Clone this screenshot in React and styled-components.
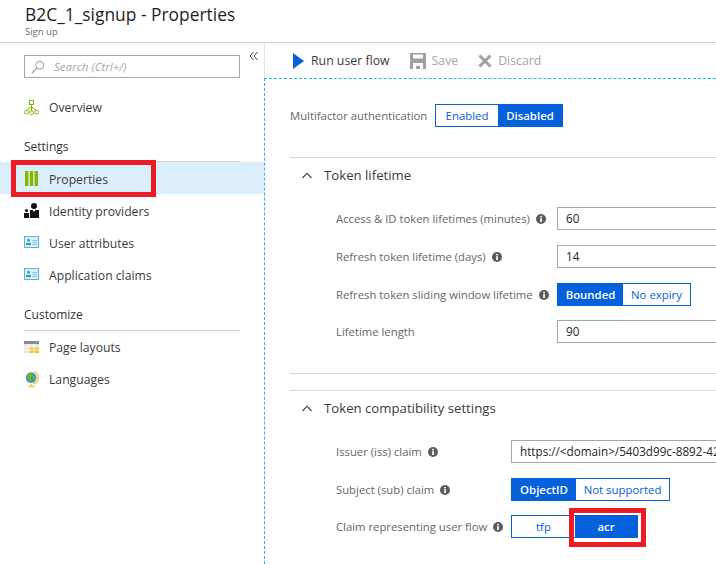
import React from "react";
import styled, { createGlobalStyle } from "styled-components";

const GlobalStyle = createGlobalStyle`
  html, body {
    margin: 0;
    padding: 0;
    background: #fff;
    overflow: hidden;
  }
  body {
    font-family: "Open Sans", "Noto Sans", sans-serif;
    font-size: 12px;
    color: #3b3b3b;
  }
  * { box-sizing: border-box; }
`;

const BLUE = "#0560dc";

const Page = styled.div`
  width: 716px;
  height: 564px;
  overflow: hidden;
  display: flex;
  flex-direction: column;
`;

const Header = styled.header`
  height: 43px;
  flex: none;
  padding: 3px 0 0 25px;
  border-bottom: 1px solid #d2d2d2;
`;

const Title = styled.h1`
  margin: 0;
  font-size: 17.4px;
  line-height: 22px;
  font-weight: 400;
  color: #1f1f1f;
`;

const Subtitle = styled.div`
  font-size: 9.5px;
  line-height: 12px;
  margin-top: 1px;
  color: #6a6a6a;
`;

const Body = styled.div`
  flex: 1;
  display: flex;
  min-height: 0;
`;

const Sidebar = styled.nav`
  width: 264px;
  flex: none;
  padding-top: 12px;
`;

const SearchRow = styled.div`
  display: flex;
  align-items: flex-start;
  padding-left: 24px;
  gap: 8px;
`;

const SearchBox = styled.div`
  width: 216px;
  height: 23px;
  border: 1px solid #a6a6a6;
  display: flex;
  align-items: center;
  gap: 9px;
  padding-left: 6px;
  font-style: italic;
  font-size: 11.5px;
  color: #a6a6a6;
`;

const Collapse = styled.span`
  display: flex;
  margin-top: -4px;
  margin-left: 1px;
`;

const NavList = styled.div`
  margin-top: 13px;
`;

const NavItem = styled.div`
  position: relative;
  height: 32px;
  display: flex;
  align-items: center;
  padding-left: 24px;
  gap: 10px;
  font-size: 12.2px;
  background: ${(p) => (p.$active ? "#dcedfc" : "transparent")};
  color: #3b3b3b;
`;

const NavText = styled.span`
  margin-top: ${(p) => (p.$low ? 2 : 0)}px;
`;

const IconSlot = styled.span`
  width: 15px;
  height: 16px;
  display: flex;
  align-items: center;
  justify-content: center;
  flex: none;
`;

const NavGroup = styled.div`
  margin: ${(p) => p.$top}px 24px 0;
  height: ${(p) => p.$height}px;
  line-height: 18px;
  color: #333;
  border-bottom: 1px solid #d2d2d2;
`;

const Callout = styled.span`
  position: absolute;
  left: ${(p) => p.$left}px;
  top: ${(p) => p.$top}px;
  width: ${(p) => p.$width}px;
  height: ${(p) => p.$height}px;
  border: 5px solid #ed1c24;
  pointer-events: none;
`;

const Main = styled.main`
  flex: 1;
  min-width: 0;
  display: flex;
  flex-direction: column;
`;

const Toolbar = styled.div`
  height: 35px;
  flex: none;
  display: flex;
  align-items: center;
  padding-left: 28px;
  gap: 20px;
  font-size: 12.3px;
  border-left: 1px solid #e2e2e2;
`;

const ToolButton = styled.span`
  display: flex;
  align-items: center;
  gap: ${(p) => (p.$disabled ? 6 : 7)}px;
  color: ${(p) => (p.$disabled ? "#a6a6a6" : "#3b3b3b")};
`;

const Content = styled.div`
  flex: 1;
  padding: 25px 0 0 25px;
  border-top: 1px dashed #1fb8e4;
  border-left: 1px dashed #1fb8e4;
`;

const TopRow = styled.div`
  display: flex;
  align-items: center;
  height: 23px;
  color: #666;
  font-size: 11.3px;
`;

const TopLabel = styled.span`
  width: 145px;
  flex: none;
  white-space: nowrap;
`;

const Divider = styled.div`
  height: 1px;
  background: #d9d9d9;
  margin-top: ${(p) => p.$top}px;
`;

const SectionHead = styled.div`
  height: 34px;
  display: flex;
  align-items: center;
  gap: 12px;
  padding-left: 12px;
  color: #3b3b3b;
  font-size: 13.2px;
`;

const Form = styled.div`
  margin-top: 15px;
  padding-left: 46px;
  display: grid;
  grid-template-columns: ${(p) => p.$labelWidth}px 1fr;
  row-gap: 15px;
`;

const Label = styled.div`
  height: 23px;
  display: flex;
  align-items: center;
  gap: 6px;
  margin-top: ${(p) => (p.$tight ? -1 : 0)}px;
  color: #666;
  font-size: 11.3px;
  white-space: nowrap;
`;

const Control = styled.div`
  min-width: 0;
  margin-top: ${(p) => (p.$tight ? -1 : 0)}px;
`;

const TextField = styled.div`
  height: 23px;
  width: 320px;
  border: 1px solid #a6a6a6;
  padding-left: 8px;
  line-height: 21px;
  font-size: 11.7px;
  color: #262626;
  white-space: nowrap;
  overflow: hidden;
`;

const Toggle = styled.div`
  display: inline-flex;
  position: relative;
  height: 23px;
  border: 1px solid ${BLUE};
  font-size: 11.4px;
`;

const Segment = styled.span`
  position: relative;
  width: ${(p) => p.$width}px;
  display: flex;
  align-items: center;
  justify-content: center;
  background: ${(p) => (p.$on ? BLUE : "#fff")};
  color: ${(p) => (p.$on ? "#fff" : BLUE)};
  font-weight: ${(p) => (p.$on ? 600 : 400)};
`;

const InfoIcon = () => (
  <svg width="10" height="10" viewBox="0 0 10 10">
    <circle cx="5" cy="5" r="5" fill="#5c5c5c" />
    <rect x="4.2" y="4.2" width="1.7" height="3.8" fill="#fff" />
    <rect x="4.2" y="1.9" width="1.7" height="1.5" fill="#fff" />
  </svg>
);

const Chevron = () => (
  <svg width="10" height="7" viewBox="0 0 10 7">
    <path d="M0.5 6 L5 1.2 L9.5 6" fill="none" stroke="#3b3b3b" strokeWidth="1.1" />
  </svg>
);

const SearchIcon = () => (
  <svg width="14" height="14" viewBox="0 0 14 14">
    <circle cx="8.8" cy="5.2" r="4" fill="none" stroke="#9a9a9a" />
    <path d="M5.8 8.2 L1 13" stroke="#9a9a9a" strokeWidth="1.2" />
  </svg>
);

const CollapseIcon = () => (
  <svg width="10" height="10" viewBox="0 0 10 10">
    <path d="M4.5 1 L1 5 L4.5 9 M8.5 1 L5 5 L8.5 9" fill="none" stroke="#444" strokeWidth="1" />
  </svg>
);

const OverviewIcon = () => (
  <svg width="15" height="15" viewBox="0 0 15 15">
    <path d="M7.5 5 V11 M7.5 7 L2.5 10.5 M7.5 7 L12.5 10.5" fill="none" stroke="#7fba00" />
    <rect x="5.5" y="0.5" width="4" height="4" fill="#fff" stroke="#7fba00" />
    <rect x="0.5" y="10.5" width="3.6" height="3.2" rx="1" fill="#fff" stroke="#7fba00" />
    <rect x="5.7" y="11" width="3.6" height="3.4" rx="1" fill="#fff" stroke="#7fba00" />
    <rect x="10.9" y="10.5" width="3.6" height="3.2" rx="1" fill="#fff" stroke="#7fba00" />
  </svg>
);

const PropertiesIcon = () => (
  <svg width="13" height="15" viewBox="0 0 13 15">
    <rect x="0" y="0" width="3.4" height="15" fill="#7fba00" />
    <rect x="4.8" y="0" width="3.4" height="15" fill="#7fba00" />
    <rect x="9.6" y="0" width="3.4" height="15" fill="#7fba00" />
  </svg>
);

const IdentityIcon = () => (
  <svg width="15" height="15" viewBox="0 0 15 15">
    <circle cx="10" cy="3" r="3" fill="#111" />
    <path d="M6 7 H8.6 L10 9 L11.4 7 H15 V15 H6 Z" fill="#111" />
    <circle cx="2.5" cy="7.6" r="1.6" fill="#111" />
    <path d="M0 10 H5 V15 H0 Z" fill="#111" />
  </svg>
);

const CardIcon = () => (
  <svg width="15" height="12" viewBox="0 0 15 12">
    <rect x="0.5" y="0.5" width="14" height="11" fill="#d8f0fb" stroke="#59b4d9" />
    <circle cx="4.5" cy="4.3" r="1.5" fill="#3999c6" />
    <path d="M2 9 V7 H7 V9 Z" fill="#3999c6" />
    <path d="M8.5 4.5 H13 M8.5 6.5 H13 M8.5 8.5 H13" stroke="#7fc6e4" />
  </svg>
);

const LayoutIcon = () => (
  <svg width="15" height="12" viewBox="0 0 15 12">
    <rect x="0" y="0" width="15" height="3" fill="#8a8a8a" />
    <rect x="0" y="3" width="15" height="9" fill="#e6e6e6" />
    <rect x="5" y="6" width="10" height="6" fill="#f2c230" />
    <path d="M0 6 H15 M0 9 H15 M5 3 V12 M10 3 V12" stroke="#fff" strokeWidth="0.8" />
  </svg>
);

const GlobeIcon = () => (
  <svg width="14" height="16" viewBox="0 0 14 16">
    <path d="M9 0.8 A6.4 6.4 0 0 1 8.5 13" fill="none" stroke="#f2c230" strokeWidth="1.4" />
    <path d="M6.5 13 V15 M3.5 15.3 H10" stroke="#f2c230" strokeWidth="1.3" />
    <circle cx="6.2" cy="6.7" r="5.4" fill="#3999c6" />
    <path d="M2.5 3.5 L6 1.8 L7.5 4 L5.5 7 L6.5 9.5 L4.8 11 L3.5 7.5 Z M8.5 6 L11 5.5 L10.8 8.5 L8.8 9.5 Z" fill="#7fba00" />
  </svg>
);

const PlayIcon = () => (
  <svg width="11" height="16" viewBox="0 0 11 16">
    <path d="M0 0 L11 8 L0 16 Z" fill={BLUE} />
  </svg>
);

const SaveIcon = () => (
  <svg width="16" height="16" viewBox="0 0 16 16">
    <path d="M0 0 H16 V16 H0 Z M3 1.5 V5.5 H13 V1.5 Z M3 10 V16 H6 V13 H10 V16 H13 V10 Z" fill="#a0a0a0" fillRule="evenodd" />
  </svg>
);

const DiscardIcon = () => (
  <svg width="14" height="14" viewBox="0 0 14 14">
    <path d="M1.5 1.5 L12.5 12.5 M12.5 1.5 L1.5 12.5" stroke="#a0a0a0" strokeWidth="3" />
  </svg>
);

const settingsItems = [
  { label: "Properties", icon: <PropertiesIcon />, active: true, low: true },
  { label: "Identity providers", icon: <IdentityIcon />, low: true },
  { label: "User attributes", icon: <CardIcon />, low: true },
  { label: "Application claims", icon: <CardIcon />, low: true },
];

const customizeItems = [
  { label: "Page layouts", icon: <LayoutIcon /> },
  { label: "Languages", icon: <GlobeIcon /> },
];

function Item({ item }) {
  return (
    <NavItem $active={item.active}>
      <IconSlot>{item.icon}</IconSlot>
      <NavText $low={item.low}>{item.label}</NavText>
      {item.active && <Callout $left={11} $top={-2} $width={145} $height={37} />}
    </NavItem>
  );
}

function Info({ children, tight }) {
  return (
    <Label $tight={tight}>
      {children}
      <InfoIcon />
    </Label>
  );
}

export default function App() {
  return (
    <Page>
      <GlobalStyle />
      <Header>
        <Title>B2C_1_signup - Properties</Title>
        <Subtitle>Sign up</Subtitle>
      </Header>
      <Body>
        <Sidebar>
          <SearchRow>
            <SearchBox>
              <SearchIcon />
              Search (Ctrl+/)
            </SearchBox>
            <Collapse>
              <CollapseIcon />
            </Collapse>
          </SearchRow>
          <NavList>
            <Item item={{ label: "Overview", icon: <OverviewIcon /> }} />
            <NavGroup $top={15} $height={24}>
              Settings
            </NavGroup>
            {settingsItems.map((item) => (
              <Item key={item.label} item={item} />
            ))}
            <NavGroup $top={16} $height={25}>
              Customize
            </NavGroup>
            {customizeItems.map((item) => (
              <Item key={item.label} item={item} />
            ))}
          </NavList>
        </Sidebar>
        <Main>
          <Toolbar>
            <ToolButton>
              <PlayIcon />
              Run user flow
            </ToolButton>
            <ToolButton $disabled>
              <SaveIcon />
              Save
            </ToolButton>
            <ToolButton $disabled>
              <DiscardIcon />
              Discard
            </ToolButton>
          </Toolbar>
          <Content>
            <TopRow>
              <TopLabel>Multifactor authentication</TopLabel>
              <Toggle>
                <Segment $width={62}>Enabled</Segment>
                <Segment $width={64} $on>
                  Disabled
                </Segment>
              </Toggle>
            </TopRow>
            <Divider $top={30} />
            <SectionHead>
              <Chevron />
              Token lifetime
            </SectionHead>
            <Form $labelWidth={221}>
              <Info>Access &amp; ID token lifetimes (minutes)</Info>
              <Control>
                <TextField>60</TextField>
              </Control>
              <Info>Refresh token lifetime (days)</Info>
              <Control>
                <TextField>14</TextField>
              </Control>
              <Info>Refresh token sliding window lifetime</Info>
              <Control>
                <Toggle>
                  <Segment $width={65} $on>
                    Bounded
                  </Segment>
                  <Segment $width={67}>No expiry</Segment>
                </Toggle>
              </Control>
              <Label $tight>Lifetime length</Label>
              <Control $tight>
                <TextField>90</TextField>
              </Control>
            </Form>
            <Divider $top={30} />
            <Divider $top={16} />
            <SectionHead>
              <Chevron />
              Token compatibility settings
            </SectionHead>
            <Form $labelWidth={175}>
              <Info>Issuer (iss) claim</Info>
              <Control>
                <TextField>https://&lt;domain&gt;/5403d99c-8892-42</TextField>
              </Control>
              <Info>Subject (sub) claim</Info>
              <Control>
                <Toggle>
                  <Segment $width={64} $on>
                    ObjectID
                  </Segment>
                  <Segment $width={93}>Not supported</Segment>
                </Toggle>
              </Control>
              <Info tight>Claim representing user flow</Info>
              <Control $tight>
                <Toggle>
                  <Segment $width={63}>tfp</Segment>
                  <Segment $width={62} $on>
                    acr
                    <Callout $left={-6} $top={-8} $width={77} $height={39} />
                  </Segment>
                </Toggle>
              </Control>
            </Form>
          </Content>
        </Main>
      </Body>
    </Page>
  );
}
